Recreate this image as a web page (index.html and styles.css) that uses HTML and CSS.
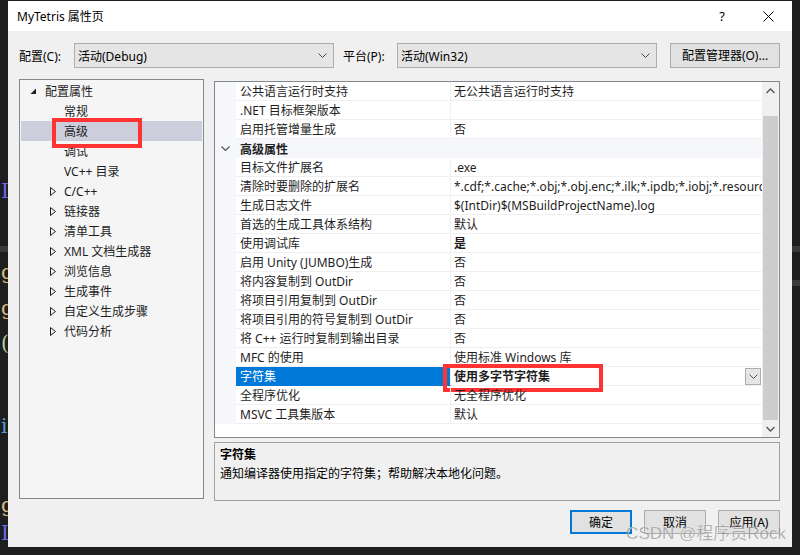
FILE: index.html
```html
<!DOCTYPE html>
<html lang="zh-CN">
<head>
    <meta charset="UTF-8">
    <title>MyTetris 属性页</title>
    <link rel="stylesheet" href="styles.css">
</head>
<body>
    <div class="side side-left">
        <span class="code c-blue" style="margin-top:180px">I</span>
        <span class="hl" style="margin-top:44px"></span>
        <span class="code c-yellow" style="margin-top:9px">g</span>
        <span class="code c-yellow" style="margin-top:14px">g</span>
        <span class="code c-green" style="margin-top:13px">(</span>
        <span class="code c-cyan" style="margin-top:61px">i</span>
        <span class="code c-yellow" style="margin-top:57px">g</span>
        <span class="code c-blue" style="margin-top:6px">I</span>
    </div>

    <div class="dialog">
        <div class="titlebar">
            <span class="title">MyTetris 属性页</span>
            <span class="tb-help">?</span>
            <svg class="tb-close" width="11" height="11" viewBox="0 0 11 11"><path d="M0.5 0.5L10.5 10.5M10.5 0.5L0.5 10.5" stroke="#000" stroke-width="1"/></svg>
        </div>

        <div class="content">
            <div class="config-row">
                <span class="label">配置(C):</span>
                <div class="combo">
                    <span>活动(Debug)</span>
                    <svg width="9" height="5" viewBox="0 0 9 5"><path d="M0.5 0.5L4.5 4.5L8.5 0.5" fill="none" stroke="#444"/></svg>
                </div>
                <span class="label label-platform">平台(P):</span>
                <div class="combo">
                    <span>活动(Win32)</span>
                    <svg width="9" height="5" viewBox="0 0 9 5"><path d="M0.5 0.5L4.5 4.5L8.5 0.5" fill="none" stroke="#444"/></svg>
                </div>
                <button class="btn btn-manager">配置管理器(O)...</button>
            </div>

            <div class="main">
                <div class="tree">
                    <div class="node node-root">
                        <svg class="tw" width="7" height="7" viewBox="0 0 7 7"><path d="M6 0.5L6 6L0.5 6Z" fill="#1e1e1e"/></svg>
                        <span>配置属性</span>
                    </div>
                    <div class="node leaf">常规</div>
                    <div class="node leaf selected">高级</div>
                    <div class="node leaf">调试</div>
                    <div class="node leaf">VC++ 目录</div>
                    <div class="node child"><svg class="tw" width="6" height="9" viewBox="0 0 6 9"><path d="M0.5 0.5L5.5 4.5L0.5 8.5Z" fill="none" stroke="#1e1e1e"/></svg><span>C/C++</span></div>
                    <div class="node child"><svg class="tw" width="6" height="9" viewBox="0 0 6 9"><path d="M0.5 0.5L5.5 4.5L0.5 8.5Z" fill="none" stroke="#1e1e1e"/></svg><span>链接器</span></div>
                    <div class="node child"><svg class="tw" width="6" height="9" viewBox="0 0 6 9"><path d="M0.5 0.5L5.5 4.5L0.5 8.5Z" fill="none" stroke="#1e1e1e"/></svg><span>清单工具</span></div>
                    <div class="node child"><svg class="tw" width="6" height="9" viewBox="0 0 6 9"><path d="M0.5 0.5L5.5 4.5L0.5 8.5Z" fill="none" stroke="#1e1e1e"/></svg><span>XML 文档生成器</span></div>
                    <div class="node child"><svg class="tw" width="6" height="9" viewBox="0 0 6 9"><path d="M0.5 0.5L5.5 4.5L0.5 8.5Z" fill="none" stroke="#1e1e1e"/></svg><span>浏览信息</span></div>
                    <div class="node child"><svg class="tw" width="6" height="9" viewBox="0 0 6 9"><path d="M0.5 0.5L5.5 4.5L0.5 8.5Z" fill="none" stroke="#1e1e1e"/></svg><span>生成事件</span></div>
                    <div class="node child"><svg class="tw" width="6" height="9" viewBox="0 0 6 9"><path d="M0.5 0.5L5.5 4.5L0.5 8.5Z" fill="none" stroke="#1e1e1e"/></svg><span>自定义生成步骤</span></div>
                    <div class="node child"><svg class="tw" width="6" height="9" viewBox="0 0 6 9"><path d="M0.5 0.5L5.5 4.5L0.5 8.5Z" fill="none" stroke="#1e1e1e"/></svg><span>代码分析</span></div>
                    <div class="mark mark-tree"></div>
                </div>

                <div class="right">
                    <div class="grid">
                        <div class="rows">
                            <div class="prop"><span class="gut"></span><span class="name">公共语言运行时支持</span><span class="val">无公共语言运行时支持</span></div>
                            <div class="prop"><span class="gut"></span><span class="name">.NET 目标框架版本</span><span class="val"></span></div>
                            <div class="prop"><span class="gut"></span><span class="name">启用托管增量生成</span><span class="val">否</span></div>
                            <div class="prop category">
                                <span class="gut"><svg width="9" height="5" viewBox="0 0 9 5"><path d="M0.5 0.5L4.5 4.5L8.5 0.5" fill="none" stroke="#555" stroke-width="1.2"/></svg></span>
                                <span class="cat-name">高级属性</span>
                            </div>
                            <div class="prop"><span class="gut"></span><span class="name">目标文件扩展名</span><span class="val">.exe</span></div>
                            <div class="prop"><span class="gut"></span><span class="name">清除时要删除的扩展名</span><span class="val">*.cdf;*.cache;*.obj;*.obj.enc;*.ilk;*.ipdb;*.iobj;*.resources;*.tlb;*.tli;*.tlh</span></div>
                            <div class="prop"><span class="gut"></span><span class="name">生成日志文件</span><span class="val">$(IntDir)$(MSBuildProjectName).log</span></div>
                            <div class="prop"><span class="gut"></span><span class="name">首选的生成工具体系结构</span><span class="val">默认</span></div>
                            <div class="prop"><span class="gut"></span><span class="name">使用调试库</span><span class="val bold">是</span></div>
                            <div class="prop"><span class="gut"></span><span class="name">启用 Unity (JUMBO)生成</span><span class="val">否</span></div>
                            <div class="prop"><span class="gut"></span><span class="name">将内容复制到 OutDir</span><span class="val">否</span></div>
                            <div class="prop"><span class="gut"></span><span class="name">将项目引用复制到 OutDir</span><span class="val">否</span></div>
                            <div class="prop"><span class="gut"></span><span class="name">将项目引用的符号复制到 OutDir</span><span class="val">否</span></div>
                            <div class="prop"><span class="gut"></span><span class="name">将 C++ 运行时复制到输出目录</span><span class="val">否</span></div>
                            <div class="prop"><span class="gut"></span><span class="name">MFC 的使用</span><span class="val">使用标准 Windows 库</span></div>
                            <div class="prop active">
                                <span class="gut"></span><span class="name">字符集</span>
                                <span class="val bold">使用多字节字符集
                                    <span class="drop"><svg width="9" height="5" viewBox="0 0 9 5"><path d="M0.5 0.5L4.5 4.5L8.5 0.5" fill="none" stroke="#555"/></svg></span>
                                </span>
                                <div class="mark mark-value"></div>
                            </div>
                            <div class="prop"><span class="gut"></span><span class="name">全程序优化</span><span class="val">无全程序优化</span></div>
                            <div class="prop"><span class="gut"></span><span class="name">MSVC 工具集版本</span><span class="val">默认</span></div>
                        </div>
                        <div class="scrollbar">
                            <div class="sb-arrow"><svg width="9" height="6" viewBox="0 0 9 6"><path d="M0.5 5L4.5 1L8.5 5" fill="none" stroke="#555" stroke-width="1.4"/></svg></div>
                            <div class="sb-track"><div class="sb-thumb"></div></div>
                            <div class="sb-arrow"><svg width="9" height="6" viewBox="0 0 9 6"><path d="M0.5 1L4.5 5L8.5 1" fill="none" stroke="#555" stroke-width="1.4"/></svg></div>
                        </div>
                    </div>

                    <div class="desc">
                        <div class="desc-title">字符集</div>
                        <div class="desc-text">通知编译器使用指定的字符集；帮助解决本地化问题。</div>
                    </div>
                </div>
            </div>

            <div class="buttons">
                <button class="btn btn-default">确定</button>
                <button class="btn">取消</button>
                <button class="btn">应用(A)</button>
            </div>
        </div>
        <div class="watermark">CSDN @程序员Rock</div>
    </div>

    <div class="side side-right">
        <span class="hl" style="margin-top:246px"></span>
        <span class="hl" style="margin-top:28px"></span>
    </div>
</body>
</html>
```

FILE: styles.css
```css
/* Visual Studio property page dialog */
* {
    box-sizing: border-box;
}
body {
    margin: 0;
    width: 800px;
    height: 555px;
    overflow: hidden;
    display: flex;
    background-color: #1e1e1e;
    font-family: "Noto Sans", "Noto Sans CJK SC", sans-serif;
    font-size: 12px;
    color: #1e1e1e;
}
.side {
    width: 8px;
    display: flex;
    flex-direction: column;
    overflow: hidden;
}
.side .code {
    font-family: "DejaVu Serif", serif;
    font-size: 20px;
    line-height: 22px;
    margin-left: 1px;
}
.side .hl {
    display: block;
    height: 6px;
    flex: none;
    background-color: #3a3a3a;
}
.c-blue { color: #6a6af0; }
.c-yellow { color: #d7ba7d; }
.c-green { color: #b5cea8; }
.c-cyan { color: #569cd6; }

.dialog {
    position: relative;
    width: 784px;
    height: 546px;
    margin-top: 1px;
    background-color: #f0f0f0;
    display: flex;
    flex-direction: column;
}
.titlebar {
    height: 30px;
    background-color: #fff;
    display: flex;
    align-items: center;
    padding-left: 9px;
}
.title {
    flex: 1;
    font-size: 12px;
    color: #000;
}
.tb-help {
    font-size: 13px;
    color: #000;
    margin-right: 38px;
}
.tb-close {
    margin-right: 18px;
}
.content {
    padding: 0 12px 0 11px;
    flex: 1;
    display: flex;
    flex-direction: column;
}
.config-row {
    display: flex;
    align-items: center;
    height: 25px;
    margin-top: 12px;
}
.label {
    width: 55px;
    color: #000;
}
.label-platform {
    margin-left: 9px;
    width: 54px;
}
.combo {
    width: 260px;
    height: 25px;
    background-color: #e5e5e5;
    border: 1px solid #adadad;
    display: flex;
    align-items: center;
    justify-content: space-between;
    padding: 0 6px 0 3px;
    color: #000;
}
.btn {
    font-family: inherit;
    font-size: 12px;
    color: #000;
    background-color: #e1e1e1;
    border: 1px solid #adadad;
    padding: 0;
    height: 24px;
    width: 62px;
}
.btn-manager {
    width: 110px;
    height: 25px;
    margin-left: 13px;
    margin-top: -1px;
}
.main {
    display: flex;
    margin-top: 11px;
    height: 422px;
}
.tree {
    position: relative;
    width: 186px;
    height: 420px;
    background-color: #f5f5f5;
    border: 1px solid #828790;
    padding: 1px 1px 0 1px;
}
.node {
    height: 20px;
    display: flex;
    align-items: center;
    color: #1e1e1e;
    white-space: nowrap;
}
.node-root {
    padding-left: 9px;
}
.node-root .tw {
    margin-right: 8px;
}
.leaf {
    padding-left: 43px;
}
.child {
    padding-left: 29px;
}
.child .tw {
    margin-right: 8px;
}
.selected {
    background-color: #cccedb;
}
.mark {
    position: absolute;
    border: 4px solid #ff3333;
    pointer-events: none;
}
.mark-tree {
    left: 32px;
    top: 38px;
    width: 90px;
    height: 30px;
}
.right {
    margin-left: 10px;
    width: 566px;
    display: flex;
    flex-direction: column;
}
.grid {
    height: 358px;
    margin-top: 2px;
    border: 1px solid #828790;
    background-color: #fff;
    display: flex;
}
.rows {
    flex: 1;
    overflow: hidden;
}
.prop {
    position: relative;
    height: 19px;
    display: flex;
    white-space: nowrap;
}
.prop .gut {
    width: 21px;
    flex: none;
    background-color: #f5f7fa;
    display: flex;
    align-items: center;
    justify-content: center;
}
.prop .name,
.prop .val {
    border-bottom: 1px solid #f0f0f0;
    display: flex;
    align-items: center;
    overflow: hidden;
}
.prop .name {
    width: 215px;
    flex: none;
    padding-left: 4px;
    border-right: 1px solid #f0f0f0;
}
.prop .val {
    flex: 1;
    padding-left: 3px;
    position: relative;
}
.bold {
    font-weight: bold;
}
.category {
    background-color: #f5f7fa;
}
.cat-name {
    flex: 1;
    display: flex;
    align-items: center;
    padding-left: 4px;
    font-weight: bold;
}
.active .name {
    background-color: #0078d7;
    color: #fff;
    border-bottom-color: #0078d7;
}
.drop {
    position: absolute;
    right: 1px;
    top: 1px;
    width: 16px;
    height: 17px;
    background-color: #e5e5e5;
    border: 1px solid #adadad;
    display: flex;
    align-items: center;
    justify-content: center;
    font-weight: normal;
}
.mark-value {
    left: 228px;
    top: -3px;
    width: 160px;
    height: 28px;
}
.scrollbar {
    width: 17px;
    flex: none;
    background-color: #f0f0f0;
    display: flex;
    flex-direction: column;
}
.sb-arrow {
    height: 17px;
    display: flex;
    align-items: center;
    justify-content: center;
}
.sb-track {
    flex: 1;
    padding: 17px 1px 0 1px;
}
.sb-thumb {
    height: 304px;
    background-color: #cdcdcd;
}
.desc {
    margin-top: 4px;
    height: 59px;
    border: 1px solid #a0a0a0;
    background-color: #f0f0f0;
    padding: 2px 0 0 5px;
    color: #000;
}
.desc-title {
    font-weight: bold;
    height: 19px;
    line-height: 19px;
}
.desc-text {
    line-height: 19px;
}
.buttons {
    display: flex;
    justify-content: flex-end;
    gap: 12px;
    margin-top: 9px;
}
.btn-default {
    border: 2px solid #0078d7;
}
.watermark {
    position: absolute;
    right: 6px;
    bottom: 3px;
    font-family: "Liberation Sans", "Noto Sans CJK SC", sans-serif;
    font-size: 17px;
    color: rgba(130, 130, 130, 0.75);
    -webkit-text-stroke: 0.4px rgba(255, 255, 255, 0.6);
    pointer-events: none;
}
```
